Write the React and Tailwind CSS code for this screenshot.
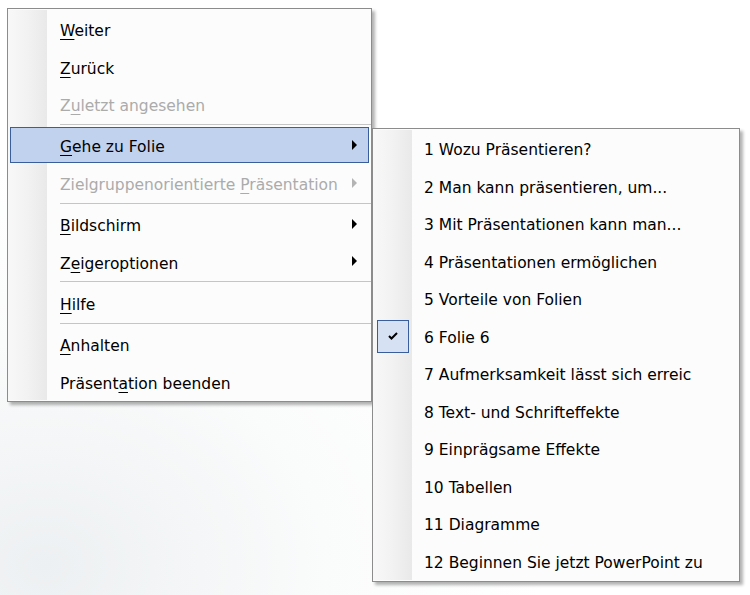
import React from 'react'

const mainItems = [
    {label: 'Weiter', key: 0},
    {label: 'Zurück', key: 0},
    {label: 'Zuletzt angesehen', key: 1, disabled: true},
    {sep: true},
    {label: 'Gehe zu Folie', key: 0, arrow: true, active: true},
    {label: 'Zielgruppenorientierte Präsentation', key: 23, arrow: true, disabled: true},
    {sep: true},
    {label: 'Bildschirm', key: 0, arrow: true},
    {label: 'Zeigeroptionen', key: 1, arrow: true},
    {sep: true},
    {label: 'Hilfe', key: 0},
    {sep: true},
    {label: 'Anhalten', key: 0},
    {label: 'Präsentation beenden', key: 7},
]

const slides = [
    '1 Wozu Präsentieren?',
    '2 Man kann präsentieren, um...',
    '3 Mit Präsentationen kann man...',
    '4 Präsentationen ermöglichen',
    '5 Vorteile von Folien',
    '6 Folie 6',
    '7 Aufmerksamkeit lässt sich erreic',
    '8 Text- und Schrifteffekte',
    '9 Einprägsame Effekte',
    '10 Tabellen',
    '11 Diagramme',
    '12 Beginnen Sie jetzt PowerPoint zu',
]

const Label = ({text, at}) => {
    if (at === undefined) return text
    return (
        <>
            {text.slice(0, at)}
            <span className="underline underline-offset-[3px] decoration-1">{text[at]}</span>
            {text.slice(at + 1)}
        </>
    )
}

const Arrow = ({disabled}) => (
    <svg width="6" height="10" viewBox="0 0 6 10" className="shrink-0">
        <polygon points="0,0 5,5 0,10" fill={disabled ? '#b4b4b4' : '#000'} />
    </svg>
)

const Gutter = ({children}) => (
    <div className="w-[39px] self-stretch shrink-0 bg-gradient-to-r from-[#f8f8f8] via-[#f2f2f2] to-[#e9e9e9] flex items-center justify-center">
        {children}
    </div>
)

const Row = ({item}) => {
    if (item.sep) {
        return (
            <div className="flex h-[3.75px]">
                <Gutter />
                <div className="flex-1 flex items-center pl-[13px]">
                    <div className="h-px w-full bg-[#c5c5c5]" />
                </div>
            </div>
        )
    }
    return (
        <div className="relative flex h-[37.5px] items-center">
            <Gutter />
            {item.active && (
                <span className="absolute left-[2px] right-[2px] top-[1px] bottom-[1px] border border-[#3a5d9c] bg-[#c1d2ee]" />
            )}
            <div className={`relative flex-1 flex items-center justify-between pl-[13px] pr-[13px] ${item.disabled ? 'text-[#ababab]' : 'text-black'}`}>
                <span className="mt-[6px]"><Label text={item.label} at={item.key} /></span>
                {item.arrow && <Arrow disabled={item.disabled} />}
            </div>
        </div>
    )
}

const SlideRow = ({label, checked}) => (
    <div className="flex h-[37.5px] items-center">
        <Gutter>
            {checked && (
                <div className="w-[32px] h-[33px] border border-[#3a5d9c] bg-[#d6e1f4] flex items-center justify-center">
                    <svg width="10" height="8" viewBox="0 0 10 8">
                        <path d="M1 4 L3.5 6.5 L9 1" stroke="#000" strokeWidth="2" fill="none" />
                    </svg>
                </div>
            )}
        </Gutter>
        <div className="flex-1 pl-[12px] mt-[4px] text-black whitespace-nowrap">{label}</div>
    </div>
)

export default function App() {
    return (
        <div className="relative w-[750px] h-[595px] overflow-hidden bg-[radial-gradient(ellipse_at_6%_95%,#edf0f2_0%,#fafbfb_28%,#ffffff_50%)] font-['DejaVu_Sans',sans-serif] text-[15.5px] leading-none">
            {/* context menu */}
            <div className="absolute left-[7px] top-[8px] w-[365px] border border-[#8c8c8c] bg-[#fcfcfc] py-[1px] shadow-[3px_3px_3px_rgba(0,0,0,0.3)]">
                {mainItems.map((item, i) => <Row key={i} item={item} />)}
            </div>

            {/* Gehe zu Folie submenu */}
            <div className="absolute left-[372px] top-[128px] w-[368px] border border-[#8c8c8c] bg-[#fcfcfc] py-[1px] shadow-[3px_3px_3px_rgba(0,0,0,0.3)]">
                {slides.map((s, i) => <SlideRow key={i} label={s} checked={i === 5} />)}
            </div>
        </div>
    )
}
